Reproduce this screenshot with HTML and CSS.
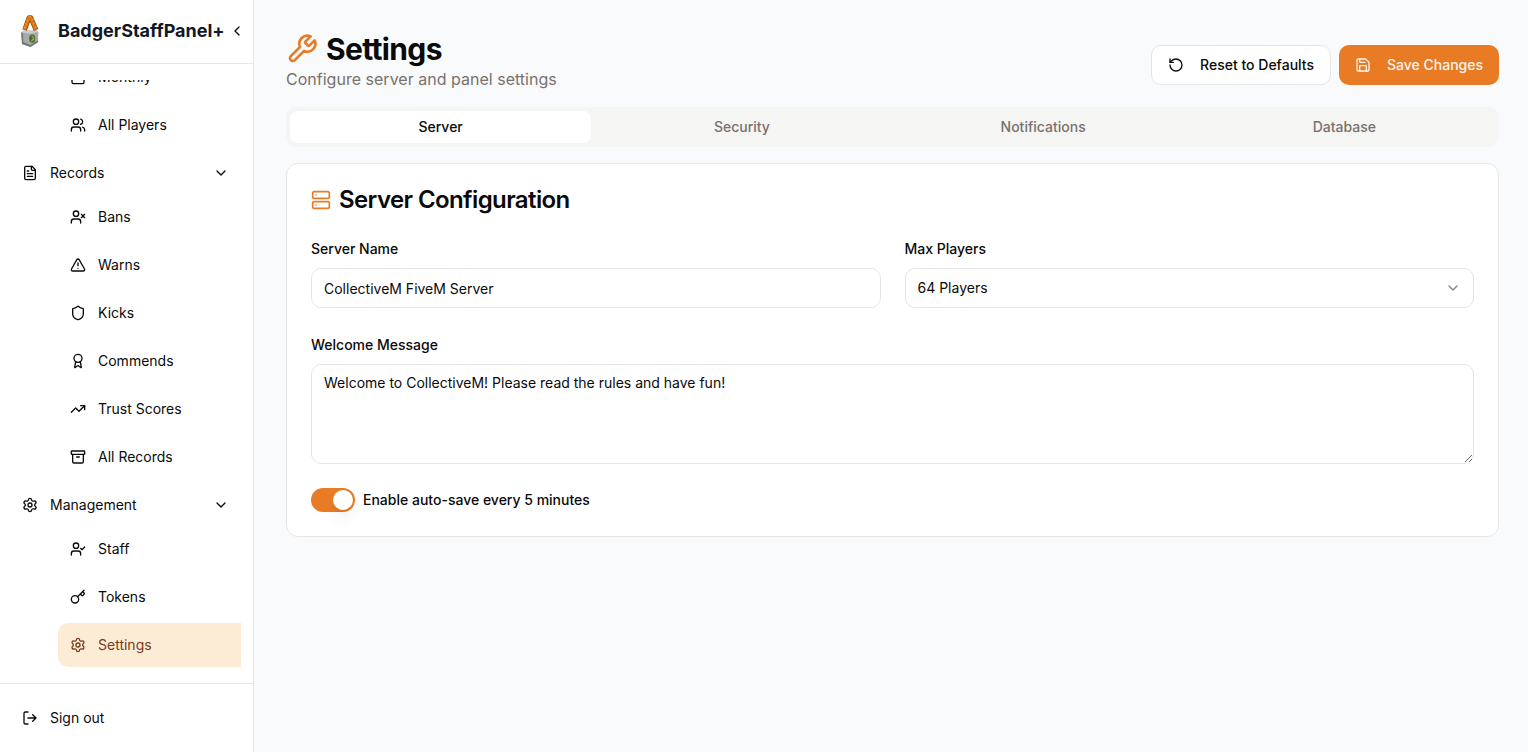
FILE: index.html
```html
<!DOCTYPE html>
<html lang="en">
<head>
<meta charset="utf-8">
<title>Settings - BadgerStaffPanel+</title>
<link rel="stylesheet" href="styles.css">
</head>
<body>
<div class="app">
  <aside class="sidebar">
    <div class="brand">
      <svg class="brand-logo" viewBox="0 0 20 34">
        <path d="M1.200 18.500 4 16.500h12.500l1.800 1.300-.3 10-7.500 5.200-8.500-3z" fill="#a9a9ab"/>
        <path d="M1.200 18.500 4 16.500h12.500l1.800 1.300-6.500 2z" fill="#cbcbcc"/>
        <path d="M1.200 18.500 3 18.800l.4 10.800-1.400.3z" fill="#77787a"/>
        <path d="M2 27.800 10.500 31l7.600-4.800v2L10.500 33 2 30z" fill="#737476"/>
        <path d="M4.600 16 9 3.600h1.800L16 16" fill="none" stroke="#8f4708" stroke-width="4.800" stroke-linejoin="round"/>
        <path d="M4.500 15.600 8.900 3.600h1.800L15.800 15.600" fill="none" stroke="#d97815" stroke-width="3.400" stroke-linejoin="round"/>
        <path d="M3.800 13l2.200 1M5.200 9.500l2 1M6.500 6l2 1M8.500 2.800l2.500.2M11.500 6l2-1M13 10l2-1M14.300 13.800l2-1" stroke="#f3a43e" stroke-width=".9"/>
        <ellipse cx="12.200" cy="24.600" rx="3" ry="4.200" fill="#4a6832"/>
        <path d="M11.500 22l2.200 1.200-1.200 3-1.500 1" fill="none" stroke="#8fb04a" stroke-width="1.200"/>
        <circle cx="13.400" cy="25.400" r=".9" fill="#df8c33"/>
      </svg>
      <span class="brand-name">BadgerStaffPanel+</span>
      <svg class="icon brand-toggle" viewBox="0 0 24 24"><path d="m15 18-6-6 6-6"/></svg>
    </div>
    <nav class="nav">
      <div class="nav-scroll">
        <div class="nav-list">
          <div class="subnav">
            <a class="nav-item"><svg class="icon" viewBox="0 0 24 24"><path d="M8 2v4M16 2v4M3 10h18"/><rect x="3" y="4" width="18" height="18" rx="2"/></svg>Monthly</a>
            <a class="nav-item"><svg class="icon" viewBox="0 0 24 24"><path d="M16 21v-2a4 4 0 0 0-4-4H6a4 4 0 0 0-4 4v2"/><circle cx="9" cy="7" r="4"/><path d="M22 21v-2a4 4 0 0 0-3-3.870M16 3.130a4 4 0 0 1 0 7.750"/></svg>All Players</a>
          </div>
          <div class="nav-group">
            <a class="nav-head"><svg class="icon" viewBox="0 0 24 24"><path d="M15 2H6a2 2 0 0 0-2 2v16a2 2 0 0 0 2 2h12a2 2 0 0 0 2-2V7Z"/><path d="M14 2v4a2 2 0 0 0 2 2h4M10 9H8M16 13H8M16 17H8"/></svg><span>Records</span><svg class="icon" viewBox="0 0 24 24"><path d="m6 9 6 6 6-6"/></svg></a>
            <div class="subnav">
              <a class="nav-item"><svg class="icon" viewBox="0 0 24 24"><path d="M16 21v-2a4 4 0 0 0-4-4H6a4 4 0 0 0-4 4v2"/><circle cx="9" cy="7" r="4"/><path d="m17 8 5 5M22 8l-5 5"/></svg>Bans</a>
              <a class="nav-item"><svg class="icon" viewBox="0 0 24 24"><path d="m21.730 18-8-14a2 2 0 0 0-3.480 0l-8 14A2 2 0 0 0 4 21h16a2 2 0 0 0 1.730-3M12 9v4M12 17h.01"/></svg>Warns</a>
              <a class="nav-item"><svg class="icon" viewBox="0 0 24 24"><path d="M20 13c0 5-3.500 7.500-7.660 8.950a1 1 0 0 1-.67-.01C7.500 20.500 4 18 4 13V6a1 1 0 0 1 1-1c2 0 4.500-1.200 6.240-2.720a1.170 1.170 0 0 1 1.520 0C14.510 3.810 17 5 19 5a1 1 0 0 1 1 1z"/></svg>Kicks</a>
              <a class="nav-item"><svg class="icon" viewBox="0 0 24 24"><path d="m15.477 12.890 1.515 8.526a.5.5 0 0 1-.81.47l-3.580-2.687a1 1 0 0 0-1.197 0l-3.586 2.686a.5.5 0 0 1-.81-.469l1.514-8.526"/><circle cx="12" cy="8" r="6"/></svg>Commends</a>
              <a class="nav-item"><svg class="icon" viewBox="0 0 24 24"><path d="m22 7-8.500 8.500-5-5L2 17"/><path d="M16 7h6v6"/></svg>Trust Scores</a>
              <a class="nav-item"><svg class="icon" viewBox="0 0 24 24"><rect x="2" y="3" width="20" height="5" rx="1"/><path d="M4 8v11a2 2 0 0 0 2 2h12a2 2 0 0 0 2-2V8M10 12h4"/></svg>All Records</a>
            </div>
          </div>
          <div class="nav-group">
            <a class="nav-head"><svg class="icon" viewBox="0 0 24 24"><path d="M9.671 4.136a2.340 2.340 0 0 1 4.659 0 2.340 2.340 0 0 0 3.319 1.915 2.340 2.340 0 0 1 2.330 4.033 2.340 2.340 0 0 0 0 3.831 2.340 2.340 0 0 1-2.330 4.033 2.340 2.340 0 0 0-3.319 1.915 2.340 2.340 0 0 1-4.659 0 2.340 2.340 0 0 0-3.320-1.915 2.340 2.340 0 0 1-2.330-4.033 2.340 2.340 0 0 0 0-3.831A2.340 2.340 0 0 1 6.350 6.051a2.340 2.340 0 0 0 3.319-1.915"/><circle cx="12" cy="12" r="3"/></svg><span>Management</span><svg class="icon" viewBox="0 0 24 24"><path d="m6 9 6 6 6-6"/></svg></a>
            <div class="subnav">
              <a class="nav-item"><svg class="icon" viewBox="0 0 24 24"><path d="M16 21v-2a4 4 0 0 0-4-4H6a4 4 0 0 0-4 4v2"/><circle cx="9" cy="7" r="4"/><path d="m16 11 2 2 4-4"/></svg>Staff</a>
              <a class="nav-item"><svg class="icon" viewBox="0 0 24 24"><path d="m15.500 7.500 2.300 2.300a1 1 0 0 0 1.400 0l2.100-2.100a1 1 0 0 0 0-1.400L19 4M21 2l-9.600 9.600"/><circle cx="7.500" cy="15.500" r="5.500"/></svg>Tokens</a>
              <a class="nav-item nav-item-active"><svg class="icon" viewBox="0 0 24 24"><path d="M9.671 4.136a2.340 2.340 0 0 1 4.659 0 2.340 2.340 0 0 0 3.319 1.915 2.340 2.340 0 0 1 2.330 4.033 2.340 2.340 0 0 0 0 3.831 2.340 2.340 0 0 1-2.330 4.033 2.340 2.340 0 0 0-3.319 1.915 2.340 2.340 0 0 1-4.659 0 2.340 2.340 0 0 0-3.320-1.915 2.340 2.340 0 0 1-2.330-4.033 2.340 2.340 0 0 0 0-3.831A2.340 2.340 0 0 1 6.350 6.051a2.340 2.340 0 0 0 3.319-1.915"/><circle cx="12" cy="12" r="3"/></svg>Settings</a>
            </div>
          </div>
        </div>
      </div>
    </nav>
    <div class="sidebar-footer">
      <a class="nav-head"><svg class="icon" viewBox="0 0 24 24"><path d="M9 21H5a2 2 0 0 1-2-2V5a2 2 0 0 1 2-2h4M16 17l5-5-5-5M21 12H9"/></svg><span>Sign out</span></a>
    </div>
  </aside>

  <main class="main">
    <header class="page-header">
      <div class="page-heading">
        <h1 class="page-title"><svg class="icon icon-title" viewBox="0 0 24 24"><path d="M14.700 6.300a1 1 0 0 0 0 1.400l1.600 1.600a1 1 0 0 0 1.400 0l3.770-3.770a6 6 0 0 1-7.940 7.940l-6.910 6.910a2.120 2.120 0 0 1-3-3l6.910-6.910a6 6 0 0 1 7.940-7.940l-3.760 3.760z"/></svg>Settings</h1>
        <p class="page-subtitle">Configure server and panel settings</p>
      </div>
      <div class="actions">
        <button class="btn btn-outline"><svg class="icon" viewBox="0 0 24 24"><path d="M3 12a9 9 0 1 0 9-9 9.750 9.750 0 0 0-6.740 2.740L3 8"/><path d="M3 3v5h5"/></svg>Reset to Defaults</button>
        <button class="btn btn-primary"><svg class="icon" viewBox="0 0 24 24"><path d="M15.200 3a2 2 0 0 1 1.400.6l3.800 3.800a2 2 0 0 1 .6 1.400V19a2 2 0 0 1-2 2H5a2 2 0 0 1-2-2V5a2 2 0 0 1 2-2z"/><path d="M17 21v-7a1 1 0 0 0-1-1H8a1 1 0 0 0-1 1v7M7 3v4a1 1 0 0 0 1 1h7"/></svg>Save Changes</button>
      </div>
    </header>

    <div class="tabs">
      <button class="tab tab-active">Server</button>
      <button class="tab">Security</button>
      <button class="tab">Notifications</button>
      <button class="tab">Database</button>
    </div>

    <section class="card">
      <h2 class="card-title"><svg class="icon icon-card" viewBox="0 0 24 24"><rect x="2" y="2" width="20" height="8" rx="2"/><rect x="2" y="14" width="20" height="8" rx="2"/><path d="M6 6h.01M6 18h.01"/></svg>Server Configuration</h2>
      <div class="field-row">
        <div class="field">
          <label class="label" for="name">Server Name</label>
          <input class="control" id="name" value="CollectiveM FiveM Server">
        </div>
        <div class="field">
          <span class="label">Max Players</span>
          <button class="control select"><span>64 Players</span><svg class="icon select-arrow" viewBox="0 0 24 24"><path d="m6 9 6 6 6-6"/></svg></button>
        </div>
      </div>
      <div class="field">
        <label class="label" for="welcome">Welcome Message</label>
        <textarea class="control textarea" id="welcome">Welcome to CollectiveM! Please read the rules and have fun!</textarea>
      </div>
      <div class="switch-row">
        <button class="switch"><span class="switch-thumb"></span></button>
        <span class="switch-label">Enable auto-save every 5 minutes</span>
      </div>
    </section>
  </main>
</div>
</body>
</html>
```

FILE: styles.css
```css
* { box-sizing: border-box; }
body, h1, h2, p { margin: 0; }
body {
  font-family: Inter, "Liberation Sans", sans-serif;
  font-size: 14px;
  line-height: 20px;
  color: #0a0a0a;
  background: #f9fafc;
}
button, input, textarea { font: inherit; color: inherit; margin: 0; }
button { border: 0; background: none; padding: 0; }

.icon {
  width: 16px;
  height: 16px;
  flex: none;
  fill: none;
  stroke: currentColor;
  stroke-width: 2;
  stroke-linecap: round;
  stroke-linejoin: round;
}

.app { display: flex; height: 752px; overflow: hidden; }

.sidebar {
  display: flex;
  flex-direction: column;
  flex: none;
  width: 254px;
  background: #fff;
  border-right: 1px solid #e5e7eb;
}
.brand {
  display: flex;
  align-items: center;
  height: 64px;
  padding: 0 8px 1px 20px;
  border-bottom: 1px solid #e5e7eb;
}
.brand-logo { width: 20px; height: 34px; flex: none; }
.brand-name {
  flex: 1;
  margin-left: 18px;
  font-size: 18px;
  line-height: 28px;
  font-weight: 700;
  color: #111827;
  white-space: nowrap;
}
.nav { flex: 1; min-height: 0; padding: 16px 12px; }
.nav-scroll {
  display: flex;
  flex-direction: column;
  justify-content: flex-end;
  height: 100%;
  overflow: hidden;
}
.nav-list { display: flex; flex-direction: column; gap: 4px; }
.subnav { display: flex; flex-direction: column; gap: 4px; margin: 0 -12px 0 46px; }
.nav-item, .nav-head { display: flex; align-items: center; gap: 12px; height: 44px; }
.nav-item { padding: 0 12px; border-radius: 10px; }
.nav-head { padding: 0 12px 0 10px; }
.nav-head span { flex: 1; }
.nav-item-active { color: #7a3a1c; background: #fcecd6; }
.sidebar-footer { padding: 12px; border-top: 1px solid #e5e7eb; }

.main {
  display: flex;
  flex-direction: column;
  gap: 16px;
  flex: 1;
  min-width: 0;
  padding: 31px 29px 32px 32px;
}
.page-header { display: flex; justify-content: space-between; height: 60px; }
.page-title {
  display: flex;
  align-items: center;
  gap: 8px;
  font-size: 30px;
  line-height: 36px;
  font-weight: 700;
  letter-spacing: -0.65px;
}
.icon-title { width: 32px; height: 32px; color: #e97b25; }
.page-subtitle { font-size: 16px; line-height: 24px; letter-spacing: 0.015px; color: #78716c; }
.actions { display: flex; gap: 8px; padding-top: 14px; }
.btn {
  display: flex;
  align-items: center;
  gap: 16px;
  height: 40px;
  padding: 0 16px;
  border-radius: 10px;
  font-weight: 500;
}
.btn-outline { background: #fff; border: 1px solid #e7e5e4; }
.btn-primary { color: #fdf5ee; background: #e97b25; }

.tabs {
  display: grid;
  grid-template-columns: repeat(4, 1fr);
  height: 40px;
  padding: 4px;
  border-radius: 10px;
  background: #f5f5f3;
}
.tab { border-radius: 8px; font-weight: 500; color: #78716c; }
.tab-active { color: #0a0a0a; background: #fff; }

.card {
  display: flex;
  flex-direction: column;
  gap: 24px;
  height: 374px;
  padding: 24px;
  background: #fff;
  border: 1px solid #e5e5e5;
  border-radius: 12px;
}
.card-title {
  display: flex;
  align-items: center;
  gap: 8px;
  font-size: 24px;
  line-height: 24px;
  font-weight: 600;
  letter-spacing: -0.6px;
}
.icon-card { width: 20px; height: 20px; color: #e97b25; }
.field-row { display: grid; grid-template-columns: 1fr 1fr; gap: 24px; }
.field { display: flex; flex-direction: column; gap: 9px; padding-top: 3px; }
.label { font-weight: 500; line-height: 20px; }
.control {
  width: 100%;
  height: 40px;
  padding: 8px 12px;
  background: #fff;
  border: 1px solid #e5e5e5;
  border-radius: 10px;
}
.select { display: flex; align-items: center; justify-content: space-between; }
.select-arrow { opacity: .5; }
.textarea { display: block; height: 100px; resize: vertical; }
.switch-row { display: flex; align-items: center; gap: 8px; }
.switch {
  display: flex;
  justify-content: flex-end;
  width: 44px;
  height: 24px;
  padding: 2px;
  border-radius: 12px;
  background: #e97b25;
}
.switch-thumb {
  width: 20px;
  height: 20px;
  border-radius: 50%;
  background: #fff;
  box-shadow: 0 10px 15px -3px rgba(0, 0, 0, .1), 0 4px 6px -4px rgba(0, 0, 0, .1);
}
.switch-label { font-weight: 500; }
```
